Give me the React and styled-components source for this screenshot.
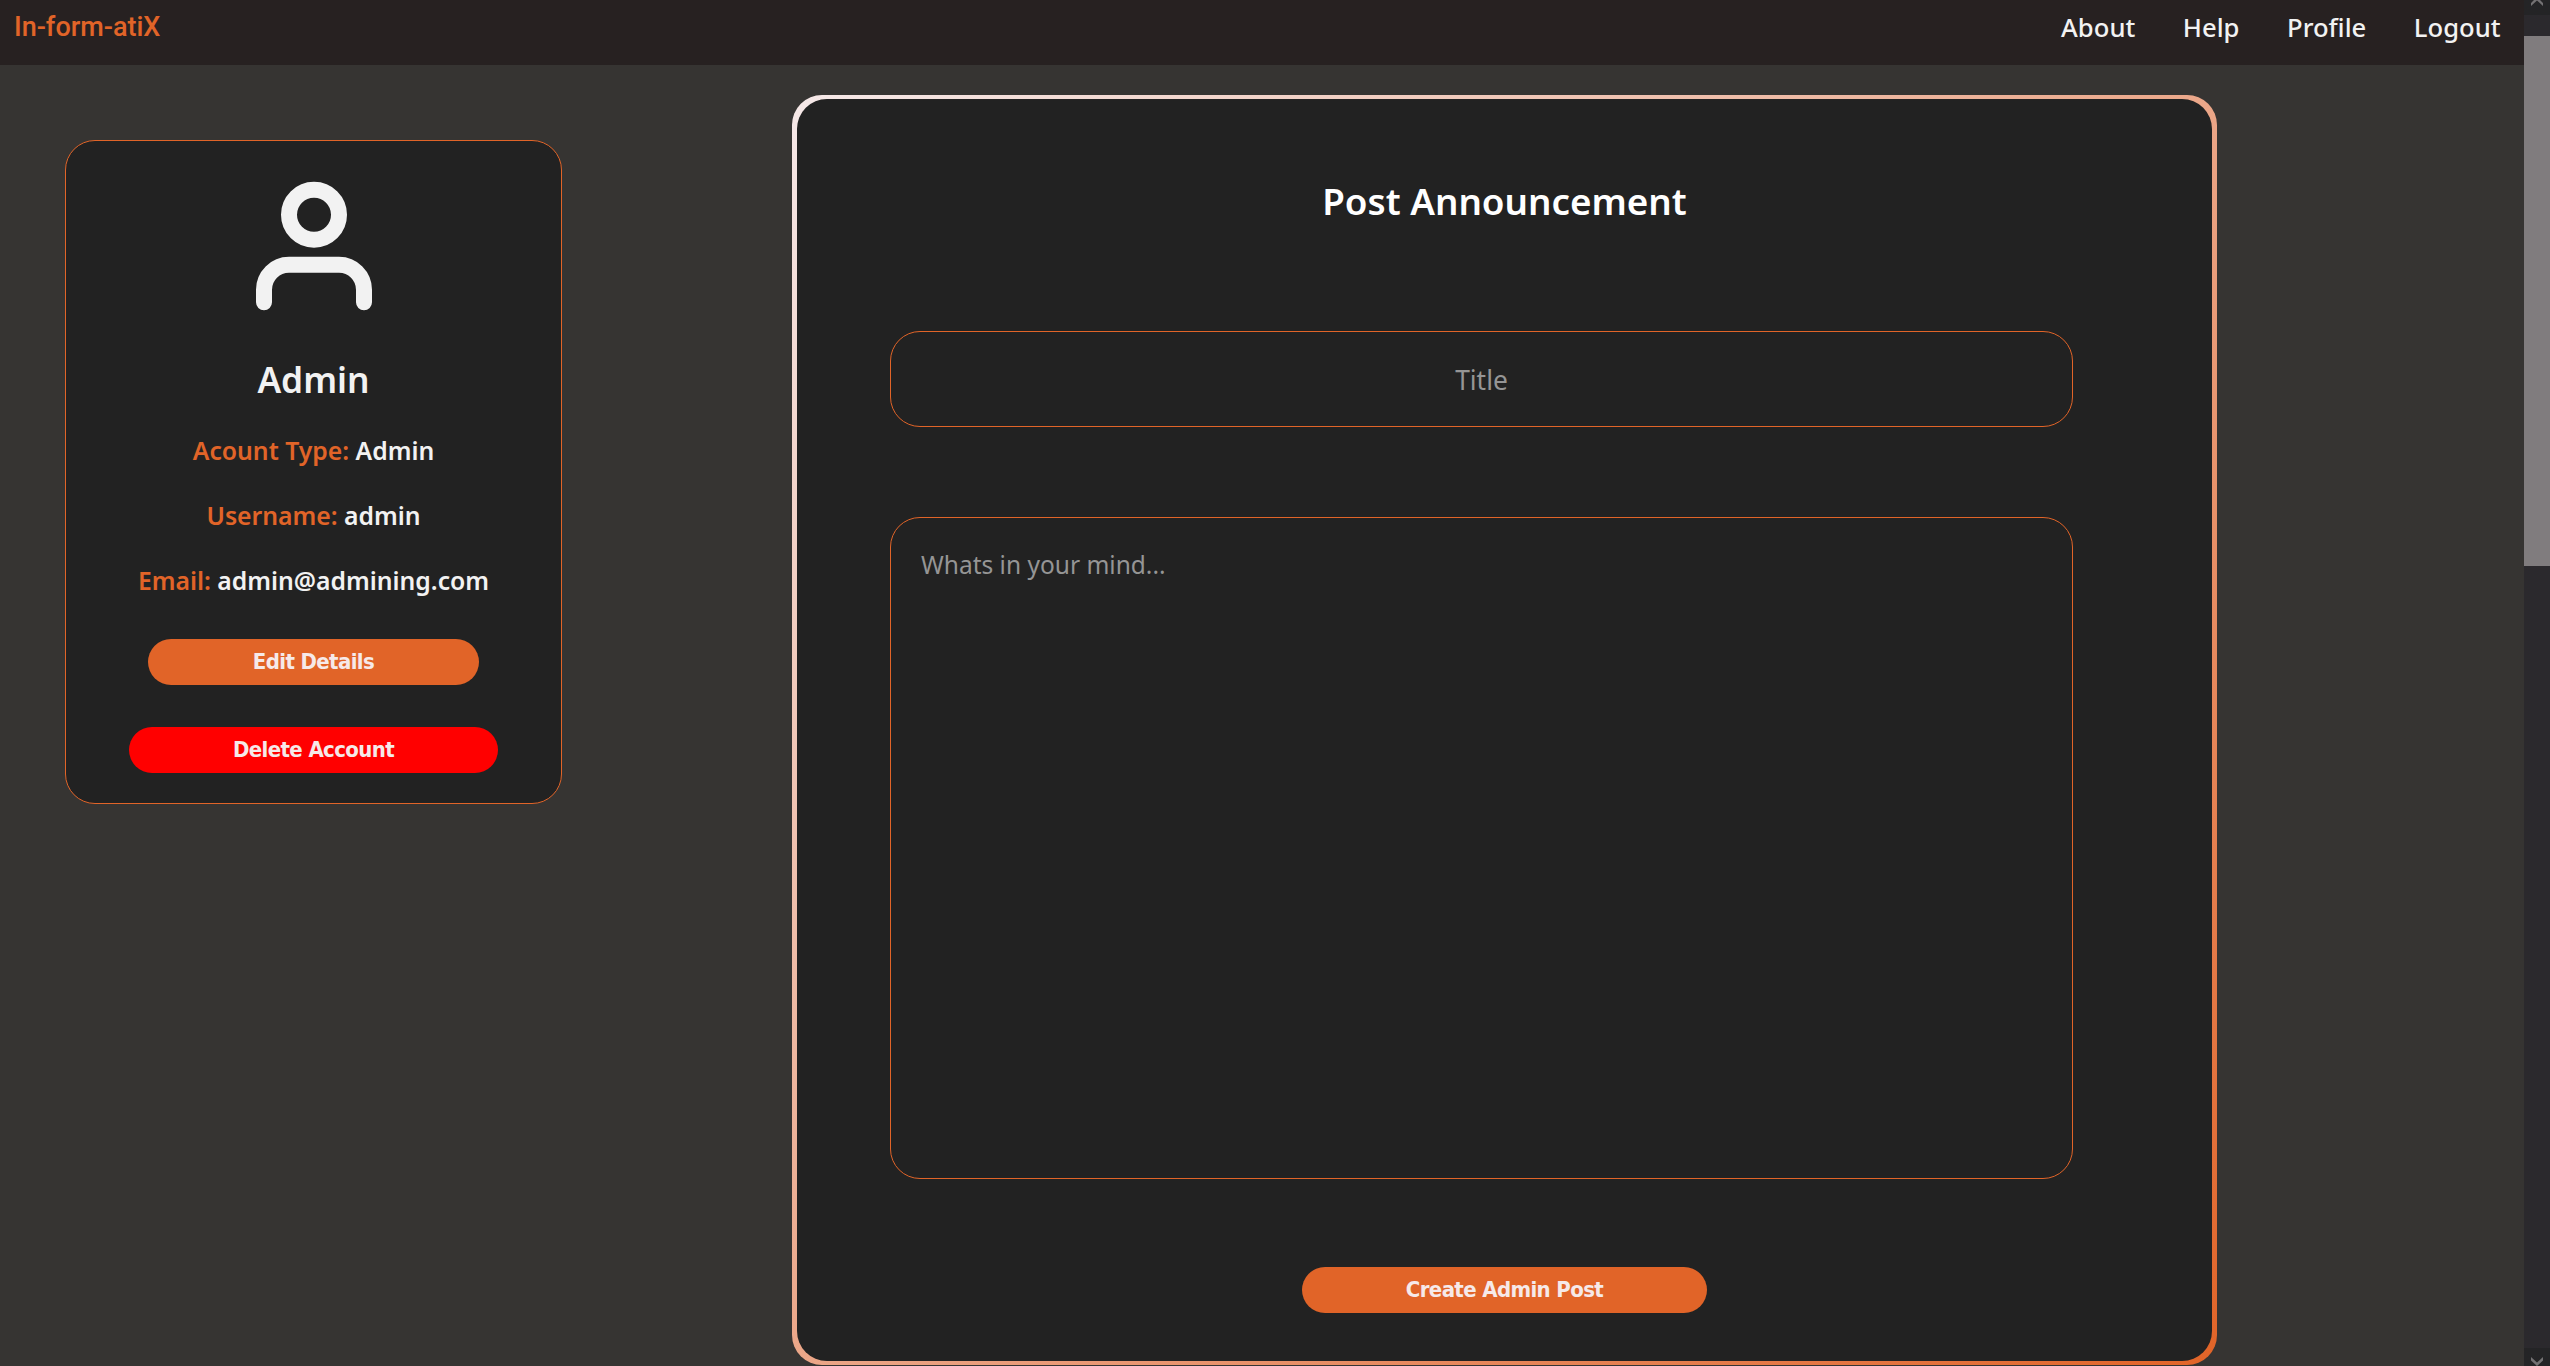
import React from "react";
import styled, { createGlobalStyle } from "styled-components";

const accent = "#e16428";
const light = "#f6e9e9";
const panel = "#222222";

const GlobalStyle = createGlobalStyle`
  * { box-sizing: border-box; }
  body {
    margin: 0;
    overflow: hidden;
    background: #363432;
    color: #f2f2f2;
    font-family: "Noto Sans", "Open Sans", sans-serif;
  }
`;

const Window = styled.div`
  display: grid;
  grid-template-columns: minmax(0, 1fr) 26px;
  width: 2550px;
  height: 1366px;
  overflow: hidden;
`;

const Page = styled.div`
  overflow: hidden;
`;

const Header = styled.header`
  display: flex;
  justify-content: space-between;
  align-items: flex-start;
  height: 65px;
  padding: 11px 23.5px 0 14px;
  background: #272121;
`;

const Logo = styled.div`
  color: ${accent};
  font: 500 27px/32px Roboto, sans-serif;
`;

const Nav = styled.nav`
  display: flex;
  gap: 47.6px;
`;

const NavLink = styled.a`
  color: #f2f2f2;
  font-size: 25.6px;
  font-weight: 500;
  line-height: 34px;
`;

const Content = styled.main`
  display: flex;
  align-items: flex-start;
  gap: 230px;
  padding: 30px 0 0 65px;
`;

const ProfileCard = styled.aside`
  display: flex;
  flex-direction: column;
  align-items: center;
  width: 497px;
  height: 664px;
  margin-top: 45px;
  padding-top: 30px;
  border: 1px solid ${accent};
  border-radius: 30px;
  background: ${panel};
`;

const Avatar = styled.svg`
  display: block;
  flex: none;
  width: 150px;
  height: 150px;
  fill: none;
  stroke: #f2f2f2;
  stroke-width: 2.56;
  stroke-linecap: round;
  stroke-linejoin: round;
`;

const Name = styled.h2`
  margin: 34px 0 0;
  font-size: 35.3px;
  font-weight: 600;
  line-height: 48px;
`;

const Detail = styled.p`
  margin: 31px 0 0;
  font-size: 24.75px;
  font-weight: 600;
  line-height: 34px;
`;

const Label = styled.span`
  color: ${accent};
`;

const Button = styled.button`
  flex: none;
  width: ${(p) => p.$width}px;
  height: 46px;
  margin: ${(p) => p.$top}px 0 0;
  padding: 0;
  border: 0;
  border-radius: 23px;
  background: ${(p) => p.$color || accent};
  color: ${light};
  font: 700 22px/46px "DejaVu Sans Condensed", "DejaVu Sans", sans-serif;
  letter-spacing: -0.63px;
`;

const PostFrame = styled.section`
  width: 1425px;
  height: 1270px;
  padding: 4px 5px;
  border-radius: 30px;
  background: linear-gradient(to bottom right, ${light}, ${accent});
`;

const PostForm = styled.form`
  display: flex;
  flex-direction: column;
  align-items: center;
  height: 100%;
  padding-top: 77px;
  border-radius: 30px;
  background: ${panel};
`;

const FormTitle = styled.h1`
  margin: 0 0 105px;
  color: #ffffff;
  font-size: 36.8px;
  font-weight: 600;
  line-height: 50px;
`;

const Field = styled.input`
  display: block;
  flex: none;
  align-self: flex-start;
  width: 1183px;
  height: ${(p) => p.$height}px;
  margin: ${(p) => p.$top || 0}px 0 0 93px;
  padding: ${(p) => p.$padding};
  border: 1px solid ${accent};
  border-radius: 30px;
  outline: 0;
  resize: none;
  background: transparent;
  color: #f2f2f2;
  font-family: "Noto Sans", "Open Sans", sans-serif;
  font-size: ${(p) => p.$size}px;
  text-align: ${(p) => p.$align || "left"};

  &::placeholder {
    color: #959595;
    opacity: 1;
  }
`;

const Scrollbar = styled.div`
  display: flex;
  flex-direction: column;
  background: #2b292d;
`;

const ScrollButton = styled.div`
  display: flex;
  justify-content: center;
  align-items: flex-start;
  flex: none;
  height: ${(p) => p.$height}px;
  padding-top: ${(p) => p.$pad || 0}px;
  background: #242426;
`;

const Thumb = styled.div`
  height: 530px;
  margin: 21px 0 auto;
  background: #807c7e;
`;

const Arrow = styled.svg`
  display: block;
  flex: none;
  width: 12px;
  height: 9px;
  fill: #737173;
`;

const links = ["About", "Help", "Profile", "Logout"];
const details = [
  ["Acount Type:", "Admin"],
  ["Username:", "admin"],
  ["Email:", "admin@admining.com"],
];

export default function App() {
  return (
    <Window>
      <GlobalStyle />
      <Page>
        <Header>
          <Logo>In-form-atiX</Logo>
          <Nav>
            {links.map((link) => (
              <NavLink key={link}>{link}</NavLink>
            ))}
          </Nav>
        </Header>
        <Content>
          <ProfileCard>
            <Avatar viewBox="0 0 24 24">
              <path d="M20 21v-2a4 4 0 0 0-4-4H8a4 4 0 0 0-4 4v2" />
              <circle cx="12" cy="7" r="4" />
            </Avatar>
            <Name>Admin</Name>
            {details.map(([label, value]) => (
              <Detail key={label}>
                <Label>{label}</Label> {value}
              </Detail>
            ))}
            <Button $width={331} $top={41}>Edit Details</Button>
            <Button $width={369} $top={42} $color="#ff0000">Delete Account</Button>
          </ProfileCard>
          <PostFrame>
            <PostForm>
              <FormTitle>Post Announcement</FormTitle>
              <Field
                placeholder="Title"
                $height={96}
                $size={26.4}
                $padding="2px 30px 0"
                $align="center"
              />
              <Field
                as="textarea"
                placeholder="Whats in your mind..."
                $height={662}
                $top={90}
                $size={24.5}
                $padding="30px"
              />
              <Button type="button" $width={405} $top={88}>Create Admin Post</Button>
            </PostForm>
          </PostFrame>
        </Content>
      </Page>
      <Scrollbar>
        <ScrollButton $height={15}>
          <Arrow viewBox="0 3 12 9">
            <path d="M0 6 6 0 12 6V9L6 3.5 0 9Z" />
          </Arrow>
        </ScrollButton>
        <Thumb />
        <ScrollButton $height={18} $pad={9}>
          <Arrow viewBox="0 0 12 9">
            <path d="M0 0 6 5.5 12 0V3.5L6 9 0 3.5Z" />
          </Arrow>
        </ScrollButton>
      </Scrollbar>
    </Window>
  );
}
